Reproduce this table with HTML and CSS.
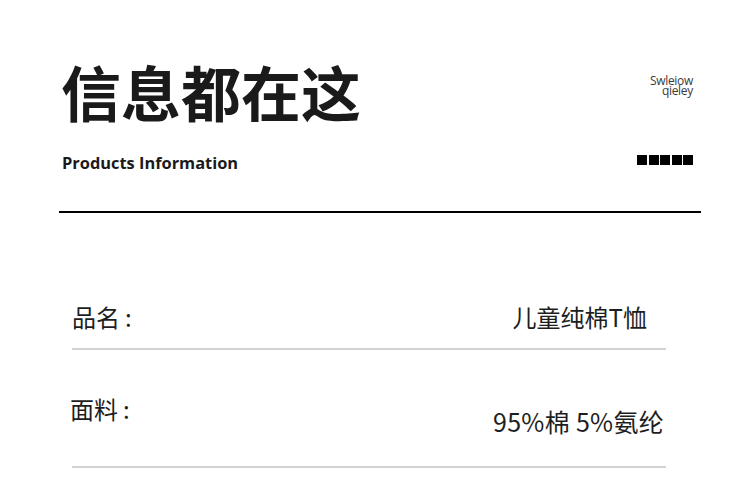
FILE: index.html
```html
<!DOCTYPE html>
<html lang="zh-CN">
<head>
<meta charset="utf-8">
<title>信息都在这</title>
<link rel="stylesheet" href="styles.css">
</head>
<body>
<div class="page">
  <header class="header">
    <div class="titles">
      <h1 class="title">信息都在这</h1>
      <div class="subtitle">Products Information</div>
    </div>
    <div class="deco">
      <div class="tag">Swleiow<br>qieley</div>
      <div class="squares"><span></span><span></span><span></span><span></span><span></span></div>
    </div>
  </header>
  <div class="rule"></div>
  <div class="info">
    <div class="row row-name">
      <div class="label">品名<span class="colon">:</span></div>
      <div class="value">儿童纯棉T恤</div>
    </div>
    <div class="row row-fabric">
      <div class="label">面料<span class="colon">:</span></div>
      <div class="value">95%棉 5%氨纶</div>
    </div>
  </div>
</div>
</body>
</html>
```
FILE: styles.css
```css
html, body {
  margin: 0;
  padding: 0;
  background: #ffffff;
}
.page {
  width: 750px;
  height: 500px;
  overflow: hidden;
  font-family: "Noto Sans CJK SC", "Noto Sans", sans-serif;
  color: #1b1b1b;
}
.header {
  display: flex;
  justify-content: space-between;
  padding: 59px 57px 0 61px;
}
.title {
  margin: 0;
  font-size: 60px;
  line-height: 64px;
  font-weight: 700;
  letter-spacing: 0;
  color: #1a1a1a;
}
.subtitle {
  margin-top: 29px;
  margin-left: 1px;
  font-family: "Open Sans", "Noto Sans", sans-serif;
  font-weight: 700;
  font-size: 16.4px;
  line-height: 22px;
  color: #1a1a1a;
}
.deco {
  display: flex;
  flex-direction: column;
  align-items: flex-end;
  padding-top: 17px;
}
.tag {
  font-family: "Open Sans", "Noto Sans", sans-serif;
  font-size: 12px;
  line-height: 10px;
  text-align: right;
  color: #3a3a3a;
  letter-spacing: -0.3px;
}
.squares {
  display: flex;
  gap: 1.5px;
  margin-top: 59px;
}
.squares span {
  width: 10px;
  height: 10px;
  background: #000;
}
.rule {
  height: 2px;
  background: #000;
  margin: 37px 49px 0 59px;
}
.info {
  margin: 0 84px 0 72px;
  padding-top: 86px;
}
.row {
  display: flex;
  justify-content: space-between;
  align-items: flex-start;
  border-bottom: 2px solid #d3d3d3;
  font-size: 24px;
  line-height: 36px;
  color: #1e1e1e;
}
.colon {
  margin-left: 5px;
}
.row-name {
  padding-bottom: 13px;
}
.row-name .value {
  padding-right: 19px;
}
.row-fabric {
  padding-top: 41px;
  padding-bottom: 27px;
}
.row-fabric .label {
  margin-left: -2px;
}
.row-fabric .value {
  margin-top: 12px;
  padding-right: 2px;
  font-size: 25px;
  letter-spacing: 0.3px;
}
```
